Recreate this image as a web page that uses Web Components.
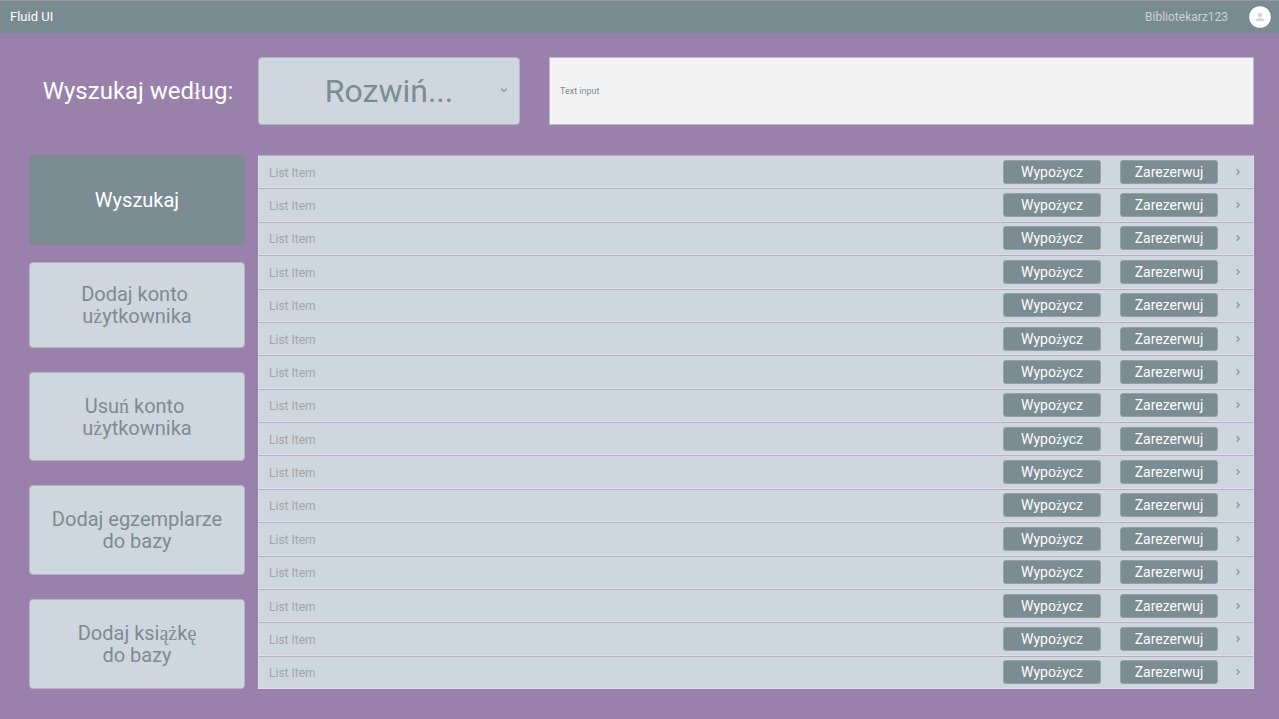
<!DOCTYPE html>
<html lang="pl">
<head>
<meta charset="utf-8">
<meta name="viewport" content="width=device-width, initial-scale=1">
<title>Fluid UI</title>
<style>
  html { height: 100%; }
  body {
    margin: 0; min-height: 100%; display: flex; flex-direction: column;
    background: #9981ab; font-family: Roboto, sans-serif;
    --slate: #7b8c92; --pale: #cfd7de; --serif: "Liberation Serif", serif;
  }
  library-app { flex: 1; }
</style>
</head>
<body>
<library-app></library-app>
<script>
const html = (markup) => {
  const t = document.createElement('template');
  t.innerHTML = markup;
  return t;
};

class Base extends HTMLElement {
  constructor() {
    super();
    this.attachShadow({ mode: 'open' }).append(this.constructor.template.content.cloneNode(true));
  }
}

class TopBar extends Base {
  static template = html(`
    <style>
      :host { display: block; }
      header {
        box-sizing: border-box; height: 33px; padding: 0 8px 0 10px; display: flex;
        align-items: center; justify-content: space-between;
        background: #788b90; border-top: 1px solid #9a95a9; color: #fff;
      }
      h1 { margin: 0; font-size: 13px; font-weight: 400; line-height: 16px; }
      .user { display: flex; align-items: center; gap: 21px; font-size: 12px; line-height: 16px; color: #c9d2d8; }
      svg { display: block; width: 22px; height: 22px; }
    </style>
    <header>
      <h1><slot></slot></h1>
      <div class="user">
        <slot name="user"></slot>
        <svg viewBox="0 0 22 22" aria-hidden="true">
          <circle cx="11" cy="11" r="10.8" fill="#fff"/>
          <circle cx="11" cy="9" r="2.2" fill="#cfd7de"/>
          <path d="M6.8 15.2v-1c0-1.5 2.6-2.3 4.2-2.3s4.2.8 4.2 2.3v1z" fill="#cfd7de"/>
        </svg>
      </div>
    </header>`);
}
customElements.define('top-bar', TopBar);

class SearchBar extends Base {
  static template = html(`
    <style>
      :host { display: grid; grid-template-columns: 216px 262px 1fr; column-gap: 13px; align-items: center; }
      label { color: #fff; font-size: 24px; line-height: 32px; text-align: center; white-space: nowrap; }
      label span { font-family: var(--serif); line-height: 0; }
      .drop { position: relative; }
      select, input { box-sizing: border-box; display: block; width: 100%; height: 68px; margin: 0; font-family: inherit; }
      select {
        appearance: none; padding: 0; border: 1px solid #b5b3c6; border-radius: 4px;
        background: var(--pale); color: var(--slate); font-size: 32px; text-align: center; text-align-last: center;
      }
      .drop svg { position: absolute; right: 12px; top: 29px; width: 8px; height: 8px; pointer-events: none; }
      .field { padding-left: 16px; }
      input {
        padding: 0 10px; border: 1px solid #c0b6cb; border-radius: 0;
        background: #f3f3f3; color: var(--slate); font-size: 9px;
      }
      label { padding-left: 2px; }
      input::placeholder { color: var(--slate); opacity: 1; }
    </style>
    <label for="by">Wyszukaj wed<span>ł</span>ug:</label>
    <div class="drop">
      <select id="by"><option>Rozwiń...</option></select>
      <svg viewBox="0 0 8 8" aria-hidden="true"><path d="M1.2 2.8 4 5.4l2.8-2.6" fill="none" stroke="#8a9496" stroke-width="1.3"/></svg>
    </div>
    <div class="field"><input type="text" placeholder="Text input" aria-label="Text input"></div>`);
}
customElements.define('search-bar', SearchBar);

class SideButton extends Base {
  static template = html(`
    <style>
      :host { display: block; height: 90px; }
      button {
        box-sizing: border-box; width: 100%; height: 100%; margin: 0; padding: 0;
        border: 1px solid #b5b3c6; border-radius: 4px; background: var(--pale); color: var(--slate);
        font-family: inherit; font-size: 20px; line-height: 22px;
      }
      :host([primary]) button { background: var(--slate); border-color: #80879a; color: #fff; }
    </style>
    <button type="button"><slot></slot></button>`);
}
customElements.define('side-button', SideButton);

class BookRow extends Base {
  static template = html(`
    <style>
      :host {
        box-sizing: border-box; display: flex; align-items: center; min-height: 30px;
        padding: 0 11px 0 10px; background: var(--pale);
        border: 1px solid #dde0e8; border-top-color: #bba9c8;
      }
      .name { flex: 1; padding-top: 2px; font-size: 12px; line-height: 16px; color: #9fa6a8; }
      .actions { display: flex; gap: 19px; margin-right: 16px; }
      button {
        box-sizing: border-box; width: 98px; height: 24px; margin: 0; padding: 0;
        border: 1px solid #93a1a8; border-radius: 3px; background: var(--slate); color: #fff;
        font-family: inherit; font-size: 14px; line-height: 20px;
      }
      button span { font-family: var(--serif); line-height: 0; }
      svg { display: block; width: 8px; height: 8px; }
    </style>
    <span class="name"><slot></slot></span>
    <div class="actions">
      <button type="button">Wypo<span>ż</span>ycz</button>
      <button type="button">Zarezerwuj</button>
    </div>
    <svg viewBox="0 0 8 8" aria-hidden="true"><path d="M2.6 1.3 5.2 4 2.6 6.7" fill="none" stroke="#929b9e" stroke-width="1.5"/></svg>`);
  connectedCallback() { this.setAttribute('role', 'listitem'); }
}
customElements.define('book-row', BookRow);

class BookList extends Base {
  static template = html(`
    <style>
      :host { display: grid; grid-auto-rows: 1fr; }
    </style>
    <slot></slot>`);
  connectedCallback() {
    this.setAttribute('role', 'list');
    for (let i = 0; i < 16; i++) {
      const row = document.createElement('book-row');
      row.textContent = 'List Item';
      this.append(row);
    }
  }
}
customElements.define('book-list', BookList);

class LibraryApp extends Base {
  static template = html(`
    <style>
      :host { display: flex; flex-direction: column; }
      main { flex: 1; display: flex; flex-direction: column; gap: 30px; padding: 24px 25px 30px 29px; }
      .body { flex: 1; display: grid; grid-template-columns: 216px 1fr; column-gap: 13px; }
      aside { display: flex; flex-direction: column; gap: 17px; }
      nav { display: flex; flex-direction: column; gap: 24px; }
      .h86 { height: 86px; }
      .h89 { height: 89px; }
      i { font-style: normal; font-family: var(--serif); line-height: 0; }
    </style>
    <top-bar>Fluid UI<span slot="user">Bibliotekarz123</span></top-bar>
    <main>
      <search-bar></search-bar>
      <div class="body">
        <aside>
          <side-button primary>Wyszukaj</side-button>
          <nav>
            <side-button class="h86">Dodaj konto&nbsp;<br>u<i>ż</i>ytkownika</side-button>
            <side-button class="h89">Usu<i>ń</i> konto&nbsp;<br>u<i>ż</i>ytkownika</side-button>
            <side-button>Dodaj egzemplarze<br>do bazy</side-button>
            <side-button>Dodaj ksi<i>ąż</i>k<i>ę</i><br>do bazy</side-button>
          </nav>
        </aside>
        <book-list></book-list>
      </div>
    </main>`);
}
customElements.define('library-app', LibraryApp);
</script>
</body>
</html>
